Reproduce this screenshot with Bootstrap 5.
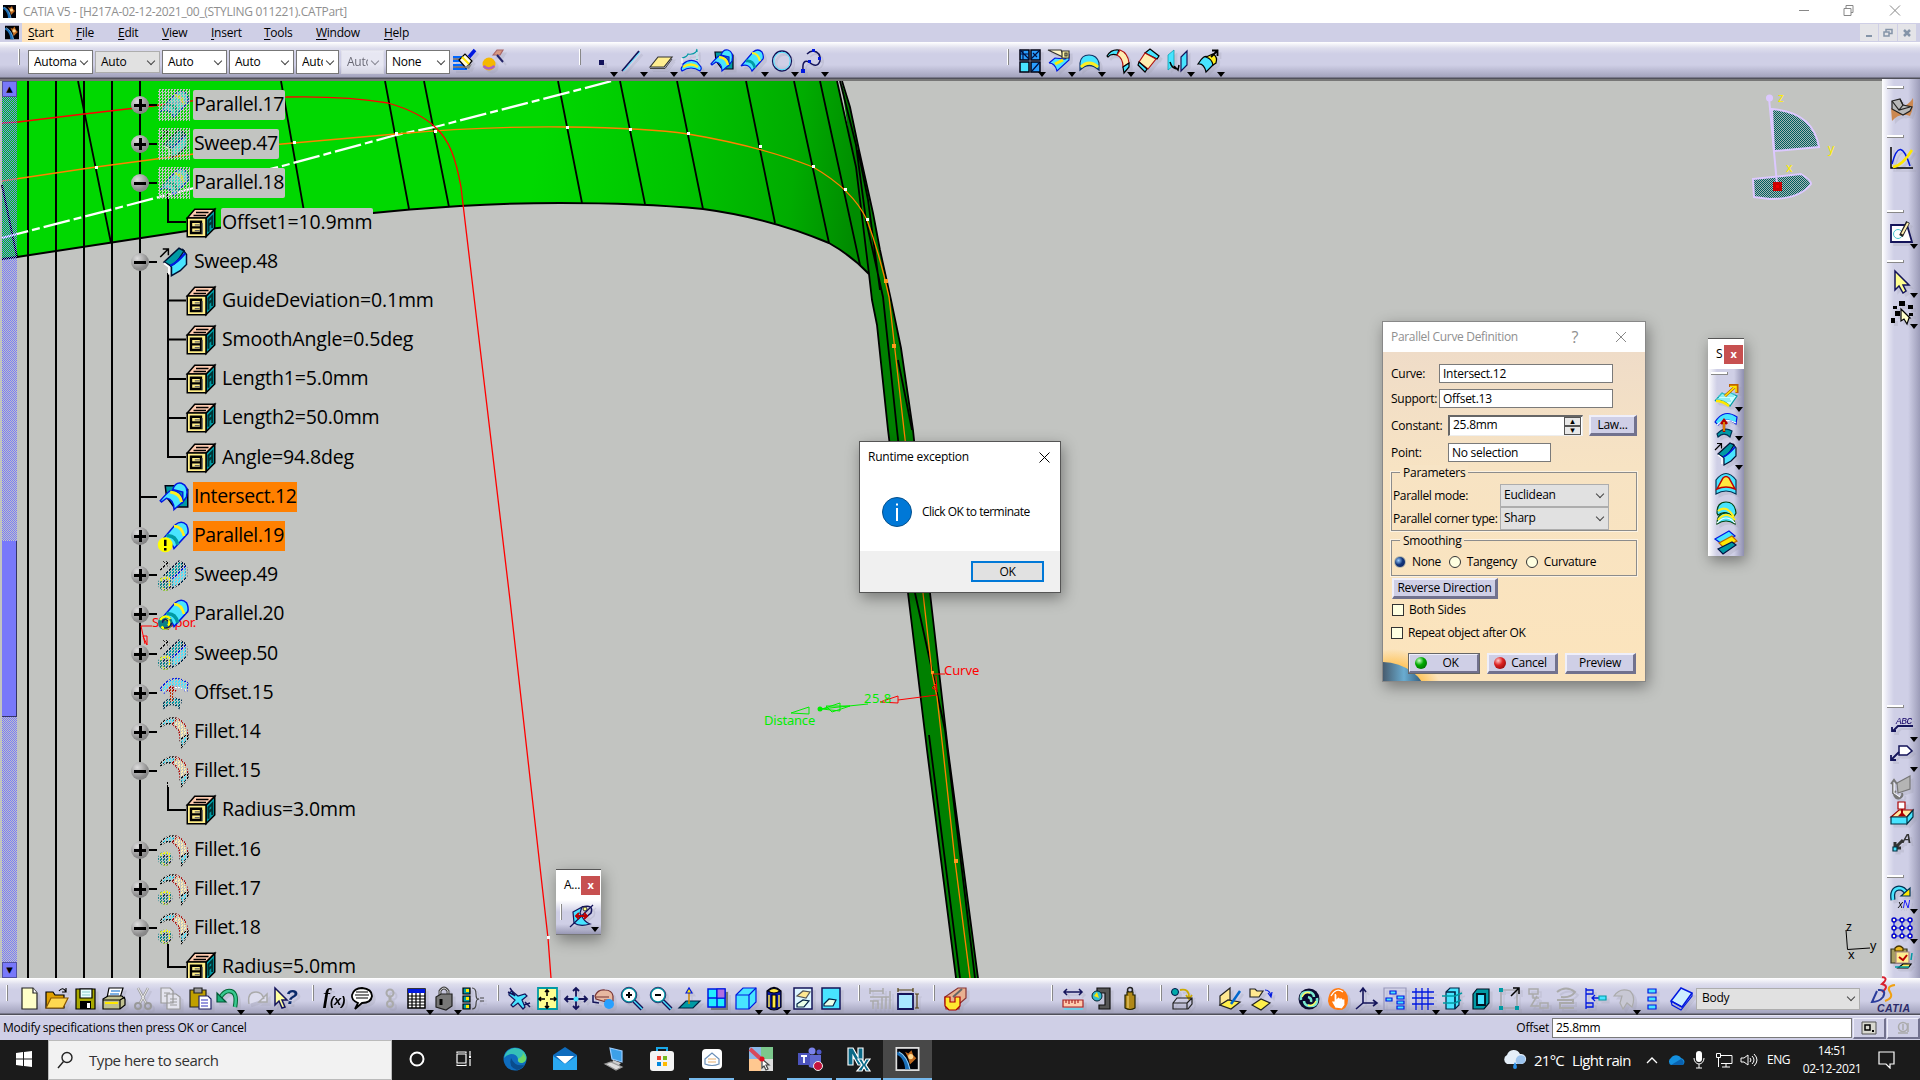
<!DOCTYPE html>
<html lang="en">
<head>
<meta charset="utf-8">
<title>CATIA V5</title>
<link href="https://cdn.jsdelivr.net/npm/bootstrap@5.3.0/dist/css/bootstrap.min.css" rel="stylesheet">
<style>
body{width:1920px;height:1080px;overflow:hidden;font:12px/1 "Open Sans","Noto Sans",sans-serif;letter-spacing:-.25px;color:#000;background:#cfcfe6}
.titleb{height:23px;background:#fff;color:#8f8f8f}
.titleb #ttl{margin-left:7px;font-size:12px;letter-spacing:-.32px}
.tlogo{margin-left:3px}
.mlogo{margin:2px 3px 0 5px}
.menub{height:19px;background:#cfcfe6}
.menub .mi{height:19px;line-height:19px;position:static;padding-left:6px}
.menub u{text-underline-offset:2px}
.m0{background:#ffe4bc;width:48px}.m1{width:42px}.m2{width:44px}.m3{width:49px}.m4{width:53px}.m5{width:52px}.m6{width:68px}
.bar{height:37px;background:linear-gradient(#fff 0,#dedeed 6px,#cfcfe6 12px,#cfcfe6 23px,#a3a3bd 35px,#50505a 36px)}
.grip{width:1px;height:16px;background:#888;border-left:1px solid #fff;flex:none;margin-bottom:8px;box-sizing:content-box}
.ic{display:inline-block;width:24px;height:24px;flex:none;position:relative}
.ic svg{width:24px;height:24px;display:block;overflow:visible;filter:drop-shadow(3px 3px 0 rgba(150,150,165,.22))}
.dd::after{content:"";position:absolute;right:-5px;bottom:-4px;border:4px solid transparent;border-top:5px solid #000;border-bottom:0}
.combos{gap:2px;margin:3px 3px 0 8px}
.combo{height:24px;line-height:20px;background:#fff;border:1px solid #777;display:flex;align-items:center;justify-content:space-between;padding:0 4px 1px 5px;flex:none;white-space:nowrap}
.combo.gray{background:#e1e1e1;border-color:#adadad;height:22px}
.combo.off{opacity:.5;border-color:#eee}
.combo .chev{width:6px;height:6px;border:solid #444;border-width:0 1px 1px 0;transform:rotate(45deg);flex:none;margin:-2px 1px 0 0}
.combo b{font-weight:400}
.combo b.cut{overflow:hidden;margin-right:4px}
.w65{width:65px}.w43{width:43px}.w64{width:64px}
.grp{display:flex;justify-content:space-between;align-items:center;flex:none}
.view{height:899px}
.canvasbox{width:1882px;position:relative;background:#c2c4c1;overflow:hidden;border-top:2px solid #777}
.canvasbox>svg{position:absolute;left:0;top:-81px}
.vscroll{position:absolute;left:2px;top:0;width:15px;height:897px;z-index:2}
.vscroll .sb{height:16px;background:#7878fa;border:1px solid #5050a0;font:13px/13px "DejaVu Sans",sans-serif;text-align:center;letter-spacing:0}
.dith{background:repeating-conic-gradient(#7878ff 0 25%,transparent 0 50%) 0 0/2px 2px}
.dith.top{height:444px}
.thumb{height:176px;background:#7878fa;border-right:1px solid #336;border-bottom:1px solid #336}
.tree{position:absolute;left:131px;top:4.4px;font-size:19.5px;letter-spacing:-.4px;z-index:1}
.tr0{height:39.2px;display:flex;align-items:center;white-space:nowrap}
.tr0 .ball{width:18px;height:18px;border-radius:50%;background:radial-gradient(circle at 35% 30%,#ddd,#8c8c8c 60%,#777);position:relative;flex:none}
.tr0 .none{background:none}
.ball::before{content:"";position:absolute;left:3px;top:8px;width:12px;height:3px;background:#000}
.ball.plus::after{content:"";position:absolute;left:8px;top:3px;width:3px;height:12px;background:#000}
.ball.none::before{display:none}
.tr0 .dash{width:8px;height:2px;background:#000;margin:0 2px 0 0;flex:none}
.tr0 .ic,.tr0 .ic svg{width:30px;height:30px}.tr0 .ic svg{filter:none}
.tr0 .lbl{margin-left:4px;padding:0 1px;height:30px;line-height:28px;display:block}
.tr0.kid{padding-left:55px}.kid .lbl{margin-left:5px;letter-spacing:-.15px}
.lbl.gr{background:#c2c4c1;border-radius:2px}.lbl.or{background:#ff8000}
.dim::after,.hid::after{content:"";position:absolute;inset:-1px;background:repeating-conic-gradient(#c2c4c1 0 25%,transparent 0 50%) 0 0/3px 3px}
.hid svg{opacity:.75}
.rbar{width:38px;background:linear-gradient(90deg,#fff 0,#e4e4f2 6px,#cfcfe6 12px,#cfcfe6 26px,#9c9cb8 38px)}
.hgrip{width:17px;height:3px;background:#fff;border-bottom:1px solid #888;border-right:1px solid #888;margin-left:5px;flex:none}
.rbar .ic{margin-left:8px}.rbar .dd::after{right:-4px}
.win{position:absolute;z-index:5;background:#fff;border:1px solid #777;box-shadow:2px 5px 14px rgba(0,0,0,.38)}
.pcd{left:1382px;top:240px;width:264px;height:361px;border-color:#888}
.pcd .cap{height:30px;color:#8f8f8f;padding:0 18px 0 8px}
.pcd .cap span{letter-spacing:-.32px}
.pcd .cap svg{margin-left:37px}
.pcd .bd{height:329px;background:linear-gradient(#efdcc8,#f7e3c3 35%,#fce4bc);padding:12px 8px 0 8px;position:relative;overflow:hidden}
.pcd .rowx{display:flex;align-items:center;white-space:nowrap}
.inp{background:#fff;border:1px solid #7a7a7a;padding:0 3px;height:19px;line-height:17px}
.btn3{background:#cfcfe6;border:solid;border-width:2px 3px 3px 2px;border-color:#efeffa #72728e #72728e #efeffa;height:21px;display:flex;align-items:center;justify-content:center;position:relative;z-index:1}
.gbox{border:1px solid #8c8c8c;outline:1px solid #fff8;position:relative}
.gbox .lg{position:absolute;left:8px;top:-8px;background:#f7e4c5;padding:0 3px;line-height:15px}
.rad{width:12px;height:12px;border:1px solid #333;border-radius:50%;background:#ffffe1;flex:none}
.rad.on{background:radial-gradient(circle at 35% 35%,#9cf,#14377c 45%,#0b1d5c);border-color:#bba}
.chk{width:12px;height:12px;border:1px solid #333;background:#ffffe1;flex:none}
.led{width:12px;height:12px;border-radius:50%;position:absolute;left:5px;top:2px}
.led.go{background:radial-gradient(circle at 35% 30%,#cfc,#0a0 40%,#050)}.led.no{background:radial-gradient(circle at 35% 30%,#fcc,#d22 40%,#700)}
.earth{position:absolute;left:0;bottom:0}
.l1{width:48px}.i1{width:174px}.r2{margin-top:6px}.r3{margin-top:7px}.l2{width:57px}
.spin{width:135px;height:21px;position:relative;border-color:#666 #eee #eee #666;border-width:2px 1px 1px 2px;line-height:16px}
.sp{position:absolute;right:1px;top:0;width:17px}.sp i{display:block;height:9px;background:#e8e8e8;border:1px solid #555;font:9px/7px "DejaVu Sans",sans-serif;text-align:center}
.law{width:48px;margin-left:6px}.r4{margin-top:7px}.i3{width:103px}
.g1{width:246px;height:59px;margin-top:10px;padding-top:11px;margin-left:0}.g1 .c3{height:23px;width:109px;padding-left:3px}.l3{width:108px;padding-left:1px;letter-spacing:-.35px}
.g2{width:246px;height:36px;margin:9px 0 0 0}.g2 .rowx{letter-spacing:-.38px}.a1{margin:0 6px 0 2px}.a2{margin:0 6px 0 8px}.a3{margin:0 6px 0 9px}
.rev{width:106px;margin:2px 0 0 1px}.k1{margin:5px 0 0 1px}.k2{margin-top:11px;letter-spacing:-.4px}.k1 .chk,.k2 .chk{margin-right:5px}
.bts{margin:14px 0 0 17px;gap:7px}.okk{width:72px;padding-left:14px;outline:1px solid #666;outline-offset:-1px}.can{width:71px;padding-left:14px}.pre{width:71px}
.palx{background:#c75050;color:#fff;width:19px;height:19px;text-align:center;line-height:17px;font-size:11px;font-weight:700}
.palcap{height:30px;padding:0 1px 0 8px;background:#fff}
.pal{left:1708px;top:257px;width:36px;height:218px;border:0;border-top:1px solid #555;background:linear-gradient(90deg,#fff 0,#cfcfe6 9px,#cfcfe6 26px,#8f8fb0 36px)}
.pal .hgrip{margin:3px 0 9px 3px}.pal .stack{padding-left:6px;gap:5.2px}
.pal2{left:556px;top:788px;width:45px;height:66px;border:0;border-top:1px solid #555;border-bottom:1px solid #777;background:linear-gradient(#fff 30px,#cfcfe6 42px,#cfcfe6 54px,#9898b4)}
.rte{left:859px;top:360px;width:202px;height:152px;border-color:#555}
.rte .cap{height:30px;padding:0 10px 0 8px}
.rte .msg{height:79px;padding-left:22px;letter-spacing:-.5px}.rte .msg span{margin-left:10px}
.rte .ft{background:#f0f0f0;padding-right:16px}
.okb{border:2px solid #0078d7;background:#e1e1e1;width:73px;height:21px;line-height:17px;text-align:center}
#bbar .ic{margin-top:4px}
.bodysel{width:164px;margin:4px 0 0 3px}.dslogo{margin:-5px 0 0 10px;overflow:visible}
.stat{height:25px;border-top:1px solid #e6e6f4}
.sbt{width:33px;height:21px;border-width:1px 2px 2px 1px;margin-left:1px}
.task{height:40px;background:#1b1b1b;color:#fff}
.task .ti{width:49px;height:40px;display:flex;align-items:center;justify-content:center;flex:none;border-bottom:2px solid transparent}
.task .run{border-image:linear-gradient(90deg,transparent 4px,#76b9ed 4px 45px,transparent 45px) 2}
.task .act{background:#484848;border-bottom:2px solid #76b9ed}
.srch{width:344px;height:40px;background:#f2f2f2;border:1px solid #bbb;color:#333;font-size:15px;letter-spacing:-.45px}
.tic,.tic svg{width:24px;height:24px}.tic svg{filter:none}
.mdi{width:18px;height:17px;background:#e4e4e8;margin:1px 0 1px 1px;display:flex;align-items:center;justify-content:center}
.tray{margin-right:24px}.t1{font-size:15px;margin-left:7px;letter-spacing:-.75px;width:38px}.t2{font-size:15px;letter-spacing:-.7px;width:57px;white-space:nowrap}.t3{font-size:12px;margin-left:9px;letter-spacing:-.5px;width:24px}.t4{font-size:12px;line-height:18px;margin-left:11px;letter-spacing:-.4px;width:60px}.t5{margin-left:16px}
</style>
<script src="https://cdn.jsdelivr.net/npm/bootstrap@5.3.0/dist/js/bootstrap.bundle.min.js"></script>
</head>
<body class="d-flex flex-column m-0">

<header class="titleb d-flex align-items-center flex-shrink-0">
  <svg width="13" height="13" viewBox="0 0 13 13" class="tlogo"><use href="#logo"/></svg>
  <span id="ttl">CATIA V5 - [H217A-02-12-2021_00_(STYLING 011221).CATPart]</span>
  <svg class="ms-auto me-1" width="121" height="23" fill="none" stroke="#888"><path d="M4 10.500H14M49 8.500h7v7h-7zM51 8v-2.500h7v7h-2M95 5.500l10 10M105 5.500l-10 10"/></svg>
</header>

<nav class="menub d-flex flex-shrink-0">
  <svg width="14" height="15" viewBox="0 0 13 13" class="mlogo"><use href="#logo"/></svg>
  <span class="mi m0"><u>S</u>tart</span><span class="mi m1"><u>F</u>ile</span><span class="mi m2"><u>E</u>dit</span><span class="mi m3"><u>V</u>iew</span><span class="mi m4"><u>I</u>nsert</span><span class="mi m5"><u>T</u>ools</span><span class="mi m6"><u>W</u>indow</span><span class="mi m7"><u>H</u>elp</span>
  <span class="mdi ms-auto"><svg width="10" height="10"><path d="M2 8h6" stroke="#8494a8" stroke-width="2"/></svg></span>
  <span class="mdi"><svg width="10" height="10" fill="none" stroke="#8494a8" stroke-width="1.500"><path d="M1 4h5v4h-5zM3 4V1.500h6v4h-3"/></svg></span>
  <span class="mdi me-1"><svg width="10" height="10"><path d="M2 2l6 6M8 2l-6 6" stroke="#8494a8" stroke-width="2.500"/></svg></span>
</nav>

<div class="bar d-flex align-items-center flex-shrink-0">
  <span class="grip" style="margin-left:18px"></span>
  <div class="combos d-flex align-items-center">
    <span class="combo w65"><b class="cut">Automatic</b><i class="chev"></i></span>
    <span class="combo gray w65"><b>Auto</b><i class="chev"></i></span>
    <span class="combo w65"><b>Auto</b><i class="chev"></i></span>
    <span class="combo w65"><b>Auto</b><i class="chev"></i></span>
    <span class="combo w43"><b class="cut">Auto</b><i class="chev"></i></span>
    <span class="combo w43 off"><b class="cut">Auto</b><i class="chev"></i></span>
    <span class="combo w64"><b>None</b><i class="chev"></i></span>
  </div>
  <i class="ic" data-i="brush"></i><i class="ic ms-1" data-i="wand"></i>
  <span class="grip" style="margin-left:74px"></span>
  <div class="grp" style="width:235px;margin-left:8px">
    <i class="ic dd" data-i="pt"></i><i class="ic dd" data-i="line"></i><i class="ic dd" data-i="plane"></i><i class="ic dd" data-i="proj"></i><i class="ic" data-i="inter"></i><i class="ic dd" data-i="par"></i><i class="ic dd" data-i="circ"></i><i class="ic dd" data-i="spline"></i>
  </div>
  <span class="grip" style="margin-left:183px"></span>
  <div class="grp" style="width:203px;margin-left:8px">
    <i class="ic dd" data-i="join"></i><i class="ic dd" data-i="split"></i><i class="ic dd" data-i="bound"></i><i class="ic dd" data-i="fil"></i><i class="ic" data-i="fil2"></i><i class="ic dd" data-i="trans"></i><i class="ic dd" data-i="extra"></i>
  </div>
</div>

<main class="view d-flex flex-shrink-0">
 <div class="canvasbox">
  <svg width="1882" height="978" viewBox="0 0 1882 978">
   <defs>
    <linearGradient id="gg" gradientUnits="userSpaceOnUse" x1="540" y1="120" x2="860" y2="160"><stop offset="0" stop-color="#00d800"/><stop offset=".45" stop-color="#00c400"/><stop offset=".8" stop-color="#00ac00"/><stop offset="1" stop-color="#008c00"/></linearGradient>
    <pattern id="dt" width="2" height="2" patternUnits="userSpaceOnUse"><rect width="2" height="2" fill="#a8b8b4"/><path d="M0 0h1v1h-1zM1 1h1v1h-1z" fill="#005c60"/></pattern>
    <symbol id="logo" viewBox="0 0 13 13"><rect width="13" height="13" fill="#020208"/><path d="M0 2C5 4 7 8 8 13H5C5 9 3 5 0 4z" fill="#1b6fb8"/><path d="M1 2c4 2 6 6 7 11" fill="none" stroke="#8cf" stroke-width=".7"/><path d="M5 2L7 3 9 1 10 4 12 6 10 8 8 10 7 6z" fill="#c06a20"/><circle cx="8.500" cy="5" r="1.600" fill="#ffd890"/></symbol>
   </defs>
   <path d="M841 81L850 107 859 150 873 213 880 250 891 300 901 348 913 430 930 593 948 750 978 978H956L927 750 908 593 888 430 877 325 872 300 869 274Z" fill="#008000"/>
   <path d="M2 81H837L856 167 867 220 869 274Q852 256 829 243Q770 218 703 209Q640 203 560 203Q510 203 460 206L410 209.500 373 213 187 231 17 257 2 259Z" fill="url(#gg)"/>
   <path d="M2 259L17 257 187 231 373 213 410 209.500 460 206Q510 203 560 203Q640 203 703 209Q770 218 829 243Q852 256 869 274" fill="none" stroke="#000" stroke-width="2"/>
   <g fill="none" stroke="#000" stroke-width="1.800">
    <path d="M78 81L111 243M281 81L305 217M385 81L409 209M424 81L449 207M558 81L582 203M620 81L645 204M677 81L703 209M746 81L775 223M794 81L829 243M820 81L860 265M837 81L856 167L869 274M2 185L17 257"/>
    <path d="M842 81L850 107 859 150 873 213 880 250 891 300 901 348 913 430 930 593 948 750 978 978"/>
    <path d="M869 274L872 300 877 325 888 430 908 593 927 750 956 978M929 735L960 978"/>
    <path d="M840 81L856 145 866 220 883 297 897 430 915 593 932 670 937 693 945 730 975 978M858 150L868 200 880 290M898 360L912 430"/>
   </g>
   <path d="M28 81V978M56 81V978M84 81V978M112 81V978M140 81V978" stroke="#000" stroke-width="2"/>
   <path d="M2 238L194 188 286 165 396 135 435 127 612 81" fill="none" stroke="#fff" stroke-width="2.300" stroke-dasharray="27 4 8 4"/>
   <g fill="none" stroke-width="1.300">
    <path d="M2 181L96 167 194 154 282 144 396 134Q486 126 567 127T688 134Q760 146 813 167Q853 190 867 220Q880 255 889 297L904 430 923 593 932 673 937 697 943 750 955 861 970 978" stroke="#ff8000"/>
    <path d="M2 123L18 122 84 114 153 106C200 98 250 97 286 97C330 96 359 98 388 103C412 110 425 117 435 127C450 140 456 160 461 187L472 280 510 600 548 938 551 978" stroke="#f00"/>
   </g>
   <path d="M95 166h3v3h-3zM293 141h3v3h-3zM395 132h3v3h-3zM434 130h3v3h-3zM566 126h3v3h-3zM629 128h3v3h-3zM687 132h3v3h-3zM759 145h3v3h-3zM812 165h3v3h-3zM844 188h3v3h-3zM866 218h3v3h-3zM547 936h3v3h-3z" fill="#fff"/>
   <path d="M884 279h4v4h-4zM892 344h4v4h-4zM954 859h4v4h-4zM931 671h3v3h-3z" fill="#ff9a20"/>
   <path d="M168 194V222H186M168 273V457H186M168 300.500H186M168 339.500H186M168 379H186M168 418H186M168 782V810H186M168 940V967H186M140 497H157" fill="none" stroke="#000" stroke-width="2"/>
   <g font-size="13" font-family="Noto Sans">
    <g fill="none" stroke="#f00"><path d="M933 674H945M936 676L937 692M932 688L936 684V690ZM937 695L898 700M880 702L898 696V703ZM141 626H152M141 626L145 644M143 636H147V645Z"/></g>
    <g fill="none" stroke="#0e0"><path d="M868 704L820 709M822 709L840 703V711ZM826 706L850 706L832 712ZM791 713L809 707V714Z"/></g><circle cx="820" cy="709" r="2.500" fill="#0e0"/>
    <text x="944" y="675" fill="#f00" textLength="35">Curve</text><text x="152" y="627" fill="#f00" textLength="44">Suppor.</text>
    <g fill="#0e0"><text x="764" y="725" textLength="51">Distance</text><text x="864" y="703" textLength="27">25.8</text></g>
   </g>
   <g stroke="#dcc8ff" stroke-width="2" fill="url(#dt)"><path d="M1772 109Q1813 112 1819 147L1774 151Z"/><path d="M1753 179L1801 174Q1811 180 1811 184Q1800 199 1770 199L1754 197Z"/><path d="M1769 98L1777 184"/></g><circle cx="1769.500" cy="98" r="3.500" fill="#dcc8ff"/><path d="M1773 182h9v9h-9z" fill="#c00"/><path d="M1776 185h3v3h-3z" fill="#e00"/>
   <g fill="#ffee00" font-size="12.500" font-family="Noto Sans"><text x="1778" y="102">z</text><text x="1828" y="153">y</text><text x="1786" y="172">x</text></g>
   <g font-size="12.500" font-family="Noto Sans"><text x="1846" y="931">z</text><text x="1870" y="950">y</text><text x="1848" y="959">x</text></g><path d="M1846 930L1847.500 949.500L1870 948" stroke="#000" fill="none"/>
  </svg>

  <div class="vscroll d-flex flex-column"><div class="sb">▴</div><div class="dith top"></div><div class="thumb"></div><div class="dith flex-fill"></div><div class="sb">▾</div></div>

  <div class="tree" id="tree"></div>

  <section class="win pcd">
   <div class="cap d-flex align-items-center"><span>Parallel Curve Definition</span><span class="ms-auto fs-6">?</span><svg width="12" height="12"><path d="M1 1l10 10M11 1L1 11" stroke="#888"/></svg></div>
   <div class="bd">
    <div class="rowx"><span class="l1">Curve:</span><span class="inp i1">Intersect.12</span></div>
    <div class="rowx r2"><span class="l1">Support:</span><span class="inp i1">Offset.13</span></div>
    <div class="rowx r3"><span class="l2">Constant:</span><span class="inp spin">25.8mm<span class="sp"><i>▴</i><i>▾</i></span></span><span class="btn3 law">Law...</span></div>
    <div class="rowx r4"><span class="l2">Point:</span><span class="inp i3">No selection</span></div>
    <div class="gbox g1"><span class="lg">Parameters</span>
      <div class="rowx"><span class="l3">Parallel mode:</span><span class="combo gray c3">Euclidean<i class="chev"></i></span></div>
      <div class="rowx"><span class="l3">Parallel corner type:</span><span class="combo gray c3">Sharp<i class="chev"></i></span></div></div>
    <div class="gbox g2"><span class="lg">Smoothing</span><div class="rowx h-100 pt-2"><i class="rad on a1"></i>None<i class="rad a2"></i>Tangency<i class="rad a3"></i>Curvature</div></div>
    <span class="btn3 rev">Reverse Direction</span>
    <div class="rowx k1"><i class="chk"></i>Both Sides</div>
    <div class="rowx k2"><i class="chk"></i>Repeat object after OK</div>
    <svg class="earth" width="60" height="34"><defs><radialGradient id="eg"><stop offset=".6" stop-color="#ffb52e" stop-opacity=".8"/><stop offset="1" stop-color="#ffb52e" stop-opacity="0"/></radialGradient><linearGradient id="eb"><stop offset="0" stop-color="#234"/><stop offset=".5" stop-color="#456"/><stop offset=".75" stop-color="#6aacd0"/><stop offset="1" stop-color="#246"/></linearGradient></defs><circle cx="10" cy="52" r="50" fill="url(#eg)"/><ellipse cx="-2" cy="52" rx="46" ry="37" fill="url(#eb)"/></svg>
    <div class="d-flex bts"><span class="btn3 okk"><i class="led go"></i>OK</span><span class="btn3 can"><i class="led no"></i>Cancel</span><span class="btn3 pre">Preview</span></div>
   </div>
  </section>

  <section class="win pal">
   <div class="palcap d-flex align-items-center"><span>S</span><span class="palx ms-auto">x</span></div>
   <div class="hgrip"></div>
   <div class="stack d-flex flex-column"><i class="ic dd" data-i="extr"></i><i class="ic dd" data-i="off"></i><i class="ic dd" data-i="swp"></i><i class="ic" data-i="fill"></i><i class="ic" data-i="loft"></i><i class="ic" data-i="blend"></i></div>
  </section>
  <section class="win pal2">
   <div class="palcap d-flex align-items-center"><span>A...</span><span class="palx ms-auto">x</span></div>
   <div class="d-flex pt-1 ps-1"><span class="grip"></span><i class="ic dd ms-2" data-i="ana"></i></div>
  </section>
  <section class="win rte d-flex flex-column">
   <div class="cap d-flex align-items-center justify-content-between"><span>Runtime exception</span><svg width="11" height="11"><path d="M0.500 .500l10 10M10.500 .500l-10 10" stroke="#000"/></svg></div>
   <div class="msg d-flex align-items-center"><svg width="30" height="30"><circle cx="15" cy="15" r="14.500" fill="#0078d7" stroke="#05508c"/><path d="M15 6.500v2M15 11v13" stroke="#fff" stroke-width="2"/></svg><span>Click OK to terminate</span></div>
   <div class="ft flex-fill d-flex justify-content-end align-items-center"><span class="okb">OK</span></div>
  </section>
 </div>

 <aside class="rbar d-flex flex-column">
  <span class="hgrip" style="margin-top:7px"></span><i class="ic" data-i="wb" style="margin-top:9px"></i>
  <span class="hgrip" style="margin-top:13px"></span><i class="ic" data-i="graph" style="margin-top:8px"></i>
  <span class="hgrip" style="margin-top:40px"></span><i class="ic dd" data-i="sk" style="margin-top:8px"></i>
  <span class="hgrip" style="margin-top:15px"></span><i class="ic dd" data-i="arrow" style="margin-top:7px"></i><i class="ic dd" data-i="sel2" style="margin-top:7px"></i>
  <span class="hgrip" style="margin-top:380px"></span><i class="ic dd" data-i="abc" style="margin-top:6px"></i><i class="ic dd" data-i="flag" style="margin-top:6px"></i><i class="ic" data-i="gsurf" style="margin-top:7px"></i><i class="ic" data-i="stamp" style="margin-top:3px"></i><i class="ic" data-i="aa" style="margin-top:5px"></i>
  <span class="hgrip" style="margin-top:20px"></span><i class="ic dd" data-i="rep" style="margin-top:8px"></i><i class="ic dd" data-i="patt" style="margin-top:6px"></i><i class="ic" data-i="clip" style="margin-top:6px"></i>
 </aside>
</main>

<div class="bar d-flex align-items-center flex-shrink-0" id="bbar"></div>

<div class="stat d-flex align-items-center flex-shrink-0">
  <span style="margin-left:3px">Modify specifications then press OK or Cancel</span>
  <span class="ms-auto" style="margin-right:3px">Offset</span><span class="inp" style="width:300px;height:20px">25.8mm</span>
  <span class="btn3 sbt"><svg width="16" height="14"><path d="M1 1h14v12H1z" fill="#d8d8d0" stroke="#555"/><path d="M4 4h5v5h-5z" fill="none" stroke="#000" stroke-width="1.500"/><path d="M11 9h2v2h-2z"/></svg></span><span class="btn3 sbt"><svg width="16" height="14" fill="none" stroke="#aaa" stroke-width="1.500"><circle cx="8" cy="6" r="4.500"/><path d="M8 3v6M3 12h10M13 2v9"/></svg></span>
</div>

<footer class="task d-flex flex-shrink-0">
  <span class="ti" style="width:48px"><svg width="16" height="16" fill="#fff"><path d="M0 2l7-1v6.500H0zM8 1l8-1v7.500H8zM0 8.500h7V15l-7-1zM8 8.500h8V16l-8-1z"/></svg></span>
  <span class="srch d-flex align-items-center"><svg width="16" height="18" class="mx-2 ms-2" fill="none" stroke="#222" stroke-width="1.400"><circle cx="10" cy="6.500" r="5"/><path d="M6.500 10.500L1 17"/></svg><span class="ms-1 ps-1">Type here to search</span></span>
  <span class="ti"><i class="ic tic" data-i="cort"></i></span><span class="ti" style="width:46px"><i class="ic tic" data-i="tv"></i></span>
  <span class="ti" style="width:56px"><i class="ic tic" data-i="edge"></i></span><span class="ti" style="width:43px"><i class="ic tic" data-i="mail"></i></span><span class="ti" style="width:55px"><i class="ic tic" data-i="rdp"></i></span><span class="ti" style="width:42px"><i class="ic tic" data-i="store"></i></span>
  <span class="ti run" style="margin-left:4px"><i class="ic tic" data-i="houz"></i></span><span class="ti"><i class="ic tic" data-i="map"></i></span><span class="ti run"><i class="ic tic" data-i="teams"></i></span><span class="ti run"><i class="ic tic" data-i="nx"></i></span><span class="ti act"><svg width="25" height="24" viewBox="-1 -1 15 15"><rect x="-1" y="-1" width="15" height="15" fill="#ddd"/><use href="#logo" width="13" height="13"/></svg></span>
  <div class="ms-auto d-flex align-items-center tray">
   <i class="ic tic" data-i="rain"></i><span class="t1">21°C</span><span class="t2">Light rain</span>
   <svg width="12" height="8" style="margin-left:17px" fill="none" stroke="#fff" stroke-width="1.300"><path d="M1 7l5-5 5 5"/></svg>
   <svg width="18" height="14" style="margin-left:9px"><path d="M4 12a4 4 0 010-7A6 6 0 0114 5a4 4 0 012 7z" fill="#1490df"/><path d="M4 12l10-6a4 4 0 012 6z" fill="#0a62b0"/></svg>
   <svg width="12" height="18" style="margin-left:8px"><rect x="3" y="0" width="6" height="11" rx="3" fill="#fff"/><path d="M1 7a5 6 0 0010 0M6 13v4M3 17h6" fill="none" stroke="#fff"/></svg>
   <svg width="17" height="16" style="margin-left:11px" fill="none" stroke="#fff"><path d="M5 3.500h11v8H5M10 12v3M6 15h8M.500 1.500h4v4h-4zM2.500 6v9"/></svg>
   <svg width="18" height="16" style="margin-left:7px" fill="none" stroke="#fff"><path d="M1 6h3l4-3v10l-4-3H1zM10 6q2 2 0 4M12 4q4 4 0 8M14 2q6 6 0 12"/></svg>
   <span class="t3">ENG</span><span class="t4 text-center">14:51<br>02-12-2021</span>
   <svg width="18" height="18" class="t5" fill="none" stroke="#fff" stroke-width="1.200"><path d="M1 1h15v12H12v4l-4-4H1z"/></svg>
  </div>
</footer>

<script>
// Icon shapes on a 24-unit grid
const N='#14145a',C='#48e4ff',Y='#ffe800',T='#009aa4',B='#0018e0';
const p=(d,f='none',s='none',w=1.2)=>`<path d="${d}" fill="${f}" stroke="${s}" stroke-width="${w}"/>`;
const mag=s=>p('M14 14l8 8','none',N,4)+p('M14 14l8 8','none',C,1.500)+`<circle cx="9" cy="8" r="7" fill="#fff" stroke="${T}" stroke-width="1.500"/><circle cx="9" cy="8" r="7.800" fill="none" stroke="${N}" stroke-width=".7"/>`+p(s,'none','#000',2);
const tube=p('M1 17L13 3Q18-1 22 3Q24 7 23 10L12 22Q9 14 1 17Z',C,B)+p('M6 12q7-1 9 7',"none",T,2.800)+p('M12 4q6 0 8 8','none','#ffee20',2.200);
const swirl='<circle cx="5" cy="19" r="5.800" fill="#0a7f88"/>'+p('M1 17a4.500 4.500 0 018-1M9 21a4 4 0 01-7 1M5 17a2 2 0 012 4','none','#ff0',1.800)+p('M3 19a2 2 0 014-1M4 23q5 1 6-4','none',N,1.200);
const I={
brush:p('M0 8h11M0 12h11M0 16h12M0 20h14','none','#06f',1.800)+p('M0 10h10M0 18h13','none','#000',.8)+p('M6 11l6-6 7 7-6 7z','#fffbe0','#000')+p('M9 8l7 7','none',Y,2)+p('M16 8l6-7','none',B,3.500)+p('M10 18l6 2 3-5','#888'),
wand:'<circle cx="8" cy="15" r="6.500" fill="#f5b800"/>'+p('M2.500 17q5 5 11 0','none','#b060c0',2.500)+p('M12 6l4-5 6 0-3 5z','#d89880','#a66')+p('M16 6l6 7','none','#226',2),
pt:p('M10 11h5v5h-5z',N),line:p('M3 22L20 2','none',N,1.800)+p('M4.500 22L21 3','none',C,1),
plane:p('M1 18L9 8H23L15 18Z','#ffee90','#333')+p('M1 19.500H16L23 10','none','#444',1),
proj:p('M3 9Q8 8 9 5Q14 6 17 3L18 0M18 1V11','none',T,1.100)+p('M3 9V14M18 3V10','none','#fff',1.200)+p('M3 22Q1 19 4 17L4 15Q11 9 18 13L22 18Q23 20 21 22Q12 16 3 22Z',C,B)+p('M4 18q8-5 15 0','none','#ffee20',2.500),
inter:p('M5 3L17 3 23 6V20H12L6 12Z',T,'#001')+p('M11 6Q13 0 18 1Q24 3 22 12L19 16V8Z',C,B)+p('M1 15Q6 9 9 7Q18 6 19 16L12 22Q12 14 6 13L2 16Z',C,B)+p('M9 8q8 1 9 8','none','#ffee20',2.500),
par:tube,circ:'<ellipse cx="12" cy="12" rx="9.500" ry="10" fill="none" stroke="#14145a" stroke-width="1.300"/><ellipse cx="12" cy="12" rx="8.200" ry="8.800" fill="none" stroke="#48e4ff"/>',
spline:p('M3 21Q2 10 9 13Q17 20 20 12Q21 3 13 2Q10 2 7 5','none',N,1.500)+p('M1 20h4v4h-4zM8 11h3v3H8zM18 8h3v3h-3zM12 0h3v3h-3z',B),
join:p('M3 1h9v10H3zM14 1h9v10h-9zM14 13h9v10h-9z','#2a9fff','#001',1.500)+p('M3 13h9v10H3z',C,'#001',1.500)+p('M3 1l9 9M14 10l8-8M15 22l7-8M16 4l4 4M6 2v9M3 5h9','none','#014'),
split:p('M2 14L8 9 18 10 22 6V11L10 22Q8 14 2 14',C,B)+p('M8 15l8-4','none',Y,3)+p('M1 1h13l4 8z','#fff7c8','#333')+p('M15 2h7v7h-7z','#fff7a0','#333')+p('M18 4h2v3h-2z','none','#333'),
bound:p('M3 21V14Q4 6 12 6Q20 6 22 14V21Q12 12 3 21Z',C,'#136')+p('M4 18Q12 10 21 18','none','#ffee20',2.800),
fil:p('M1 7Q5 0 13 1L11 6Q5 4 2 8Z',C,'#000')+p('M11 6L14 1Q22 4 23 14L17 18Q17 9 11 6Z','#ffeeb0','#b01010')+p('M17 18l6-4v4l-5 6z',C,'#000'),
fil2:p('M9 4L14 0 23 7 21 10Z',C,'#000')+p('M9 4L20 10 12 20 3 13Z','#ffeeb0','#b01010')+p('M3 13l8 7-2 3-7-7z',C,'#000'),
trans:p('M2 6L8 1V16L2 21Z',C,T,.7)+p('M15 8L21 2V16L15 22Z',C,N)+p('M4 13q2 7 8 7M8 17l4 4 1-5','none','#000',1.500),
extra:p('M2 15Q8 5 12 8Q17 9 17 16L10 23Q8 14 2 15Z',C,'#000')+p('M10 8L17 5Q22 8 20 14L17 16Q16 10 10 8z','#ffee20','#000')+p('M15 8L22 1M16 1.500h5.500V7','none','#000',1.800),
extr:p('M1 17L8 9Q12 12 15 8L23 12 16 22Q8 14 1 17Z','#c8ffff',T)+p('M2 15h14M4 12h16M6 10h15M8 17h9','none','#58dce8',1)+p('M2 17Q9 17 15 22','none',Y,2.500)+p('M11 12L22 2M15 1.500h8V9','none','#c06000',3)+p('M11 12L22 2M16 2.500h6V8','none',Y,1.500),
off:p('M1 9Q10-5 23 4L22 11Q12 3 4 12Z',C,B)+p('M3 12Q11 4 22 10','none','#fff',1.300)+p('M3 21Q10 13 18 18L16 24Q10 18 4 24Z',T,'#035')+p('M10 19V7M7 11l3-4 3 4','none','#b00000',2.500)+p('M10 18V9','none',Y,1.100),
swp:p('M6 12Q12 13 15 8L19 2 22 6V14L17 19 10 23V16Z',C,'#013')+p('M4 12L16 1 20 3Q14 14 9 15Z',T,'#013')+p('M9 15Q14 13 21 5','none',B,1.800)+p('M1 8L7 2M3 1.500h4.500v5','none','#000')+p('M4 13L8 16V22','none','#fff',1.500),
fill:p('M2 22V8Q12-5 22 8V22Q12 16 2 22Z',C,'#035')+p('M3 17L9 6q3-3 6 0L21 17Q12 13 3 17Z','#ffe840','#c00000',1.500),
loft:p('M3 12Q3 1 12 1Q21 1 22 12L19 17Q12 8 4 14Z',C,'#041')+p('M3 23Q3 12 12 12Q20 12 21 23Q12 17 3 23Z',C,'#041')+p('M4 10Q12 3 20 16M4 19q8-10 17 0','none','#ffee20',2.200)+p('M3 22q9-10 18 0','none','#fff',1.200),
blend:p('M1 9L15 1 21 6 8 14Z',C,B)+p('M5 13L18 6 23 11 10 18Z',Y,'#b60')+p('M4 19L18 12 22 15 9 24Z',T,'#014'),
ana:p('M3 8L12 3 10 9Q14 18 20 20Q10 23 4 19Z',C,N)+p('M12 3Q24 0 21 9L15 14','none',N,1.500)+'<circle cx="15" cy="5" r="2" fill="#ff8" stroke="#333"/>'+p('M0 23L23 1','none',N)+p('M7 12h9M9 9l-3 3 3 3M14 9l3 3-3 3','none','#b00',2),
wb:p('M1 10Q6 13 10 10Q20 6 23 0Q24 10 20 18Q10 14 2 23Z','#cc8850')+p('M2 3L10 1 13 7 22 9 20 13 13 17 2 11Z','#b8b8b8','#222')+p('M10 1l3 6-4 5M2 3l7 9 11-3','none','#222'),
graph:p('M1 1V22H23','none','#000',1.500)+p('M2 18Q10-12 20 20','none',B,1.500)+p('M3 21Q12 20 22 4','none',Y,2.500),
sk:p('M1 4H17L22 21H1Z','#fff',N,1.800)+'<circle cx="8" cy="13" r="4.500" fill="none" stroke="#48c4cf"/>'+p('M11 15L18 1','none','#222',4)+p('M12 13L18 2','none','#ffeeb0',2),
arrow:p('M5 1V20L9 16 13 23 16 21 13 15H19Z','#ffff90',N,1.500),
sel2:p('M3 5h4v3H3zM9 0h6v5H9zM18 4h5v4h-5zM1 17h4v5H1zM5 10h5v5H5zM19 12h4v3h-4z','#000')+p('M11 8V20L14 18 17 23 19 17H20Z','#ffc',"#000"),
abc:'<text x="6" y="10" font-size="9.500" font-family="Liberation Mono" letter-spacing="-.5" fill="#106">ABC</text>'+p('M23 12H8L3 17M2 13v4h4','none',N,1.800),
flag:p('M9 2H17L22 7 17 11H9Z','#fff',N,1.500)+p('M9 8L2 15M1 11v5h5','none',N,1.800),
gsurf:p('M7 8L20 1V14L8 18Z','#b4b4b4','#777')+p('M3 8V18L9 23M1 9l3-4 3 4M6 16a4 4 0 106 2','none','#777',2)+p('M4 8V18L10 22','none','#fff',1),
stamp:p('M1 15L9 8H23L17 15Z','#ffe8a0','#900')+p('M1 15H17V22H1ZM17 15L23 8V15L17 22Z',C,'#034')+p('M8 0h7v7H8z','#fff','#a00')+p('M11 7v4l-3 3h8l-3-3V7','#a00'),
aa:'<text x="12" y="12" font-size="13" font-weight="700" font-family="Liberation Sans" fill="#333">A</text>'+p('M13 9L6 16M5 11v6h6','none','#333',3)+p('M3 16h4v4H3z',C,'#034'),
rep:p('M3 14Q1 3 9 2Q14 2 17 8','none','#035',5)+p('M3 14Q1 3 9 2Q14 2 17 8','none',C,2.500)+p('M11 10h9V2z',Y,'#035')+'<text x="8" y="22" font-size="10" font-family="Liberation Sans">x<tspan fill="#00f">N</tspan></text>',
patt:p('M4 4H20M4 12H20M4 20H20M4 4V20M12 4V20M20 4V20','none',B)+[4,12,20].map(x=>[4,12,20].map(y=>`<circle cx="${x}" cy="${y}" r="2" fill="#ffc" stroke="#00c" stroke-width="1.500"/>`).join('')).join(''),
clip:p('M1 3h16v14H1z','#a8a060','#332')+p('M5 2q4-4 8 0v3H5z',"#e8b820",'#430')+p('M6 6h13v11H6z','#ffee90','#a88')+p('M9 11l4 3 4-5','none','#b00',2)+p('M8 22l5-4h8l-3 4z','#ffee60','#000')+p('M22 7l-1 7M5 21h14','none',T,1.500),
new:p('M5 1H16L20 6V22H5Z','#ffffc8','#222')+p('M16 1V6H20','#fff','#222'),
open:p('M1 5h7l2 3h9v13H1z','#e0a000','#000')+p('M1 21L6 11H23L18 21Z','#ffd850','#850')+p('M14 4q4-5 7 1M21 1v4h-4','none','#000'),
save:p('M2 2h19v20H2z','#a8a800','#000')+p('M6 2h12v9H6z','#eaffff','#000')+p('M8 5h8M8 8h8','none','#8cc')+p('M6 14h11v8H6z','#000')+p('M13 16h3v5h-3z','#fff'),
print:p('M7 1h14l-3 10H5z','#fff','#000')+p('M9 4h9M8 7h9','none','#06c')+p('M1 12l5-3h14l3 3v6l-5 4H1z','#c0c090','#000')+p('M1 13h17v9M18 13l5-3','none','#000')+p('M3 16h13','none',Y,2),
cut:p('M7 1l8 15M17 1L9 16','none','#999',2.500)+p('M7 1l8 15M17 1L9 16','none','#eee',1)+'<g fill="none" stroke="#999" stroke-width="2"><circle cx="7" cy="19" r="3"/><circle cx="17" cy="19" r="3"/></g>',
copy:p('M2 1h9l3 3v12H2zM8 7h9l4 3v12H8z','#e4e4ee','#999')+p('M5 6h6M5 9h3M11 12h7M11 15h7M11 18h7','none','#999'),
paste:p('M2 3h16v17H2z','#c0a000','#222')+p('M6 1h8v5H6z','#999','#222')+p('M11 9h9l3 3v10H11z','#fff','#226')+p('M13 13h7M13 16h7M13 19h7','none','#33b'),
undo:p('M19 20Q22 4 13 4Q8 4 4 11','none','#063',4.500)+p('M19 20Q22 4 13 4Q8 4 4 11','none','#38c890',2.500)+p('M1 6V15H10Z','#18b078','#053'),
redo:p('M4 17Q2 5 11 5Q17 5 19 12M22 7V15H14Z','#dde','#aaa',1.500),
help:p('M2 1V18L6 14 9 21 12 20 9 13H14Z','#ffffa0',N,1.500)+'<text x="12" y="17" font-size="21" font-weight="700" font-family="Liberation Sans" fill="#0a2a6a">?</text>',
fx:'<text x="1" y="16" font-size="21" font-style="italic" font-weight="700" font-family="Liberation Serif">f</text><text x="8" y="18" font-size="13" font-weight="700" font-family="Liberation Sans">(x)</text>',
bub:p('M5 22L8 16Q1 13 2 8Q4 1 12 1Q22 2 22 9Q21 16 12 16Z','#fff','#000',1.800)+p('M6 5h12M5 8h14M6 11h12','none','#000'),
key:'<circle cx="12" cy="6" r="3.500" fill="none" stroke="#aaa" stroke-width="2"/><circle cx="12" cy="17" r="3" fill="none" stroke="#aaa" stroke-width="2"/>'+p('M12 10v3','none','#aaa',3),
tbl:p('M3 2h17v19H3z','#fff','#000',1.500)+p('M3 2h17v4H3z',B)+p('M3 9h17M3 12h17M3 15h17M3 18h17M7 6v15M11 6v15M15 6v15','none','#000'),
lock:p('M7 10V4q4-6 8 0v5','none','#444',3)+p('M7 10V4q4-6 8 0v5','none','#ccc',1)+p('M3 10l5-3h11v12l-6 4-10-3z','#777','#222')+p('M8 12v6','none','#000',3),
conf:p('M2 1h7v6H2zM2 9h7v6H2zM2 17h7v5H2z',T,'#000')+p('M5 2h3v3H5zM5 10h3v3H5zM5 18h3v3H5z',Y)+p('M11 1q4 0 4 6t3 5q-3 0-3 5t-4 5M19 11h4M19 14h4','none','#444'),
fly:p('M2 6L5 4 11 9 18 7 20 9 15 13 18 20 16 22 11 16 6 20 4 18 8 13 2 8Z',C,N)+p('M3 1l5 8M1 5l6 3M18 15l5 5M17 18l6-2','none',N,1.500),
fit:p('M3 1h19v21H3z','#ffff90',T,1.800)+p('M12 3v6M12 15v6M4 12h6M15 12h6M10 5l2-2 2 2M10 19l2 2 2-2M6 10l-2 2 2 2M19 10l2 2-2 2','none','#000',1.600),
pan:p('M12 1v21M1 12h22M9 4l3-3 3 3M9 19l3 3 3-3M4 9l-3 3 3 3M20 9l3 3-3 3','none',N,1.800)+'<circle cx="12" cy="12" r="2.500" fill="#48e4ff"/>',
rot:p('M3 9Q6 2 13 3Q20 3 21 9V14L14 15 4 12Z','#e8b8a0','#733')+p('M4 10h13M12 13h6','none','#733')+'<circle cx="17" cy="17" r="5" fill="#28a0ff"/>'+p('M1 8v7l6 1','none',N,1.500),
zin:mag('M6 8h6M9 5v6'),zout:mag('M6 8h6'),
norm:p('M2 21L9 14H23L16 21Z',T,'#024')+p('M12 17V4','none','#c80',1.500)+p('M9 6l3-5 3 5z',Y,B),
multi:p('M5 5h17v18H5z','#777')+p('M2 2h17v18H2z','#2ef',B,1.500)+p('M11 2v18M2 11h17','none',B,1.500)+p('M11 2h8v9h-8z','#b070e0',B),
cube:p('M2 8L9 1H22V15L15 22H2Z',C,B)+p('M2 8H15V22M15 8L22 1','none',B),
cyl:p('M5 4Q12-3 19 4V20Q12 26 5 20Z','#0818a0','#001')+p('M6 4Q12-1 18 4Q12 8 6 4ZM10 8h4v13h-4z','#ffe840','#001')+p('M7 8v12M17 8v12','none','#ffe840',1.500),
h1:p('M3 1h18v21H3z','#ddf6ff',N,1.500)+p('M6 9l6-5 7 1-4 6z','#ffe890','#555')+p('M6 17l6-4 6 1-5 6H6z','#e8ffe8','#024'),
h2:p('M3 1h18v21H3z',C,N,1.500)+p('M5 17l5-5 7 1-3 6H5z','#e8ffe8','#024'),
d1:p('M2 4h13M2 1v6M15 1v6M2 10h19M2 14h8v8M5 14v8M14 10v12M18 10v12M22 4v18','none','#aaa',1.500),
d2:p('M2 7h15v15H2z','#a8e8ff',N,1.800)+p('M2 3h15M2 1v4M17 1v4M21 7v14M19 7h4M19 21h4','none','#541'),
cutp:p('M2 10L15 1h8v10l-7 6v5H3l-1-7z','#e8b090','#833')+p('M2 10h5v5h5v-5h5v9l-4 4H6l-4-4z','#ffe830','#a00')+p('M10 10L19 2','none','#666',2),
meas:p('M3 5h18M6 2L3 5l3 3M18 2l3 3-3 3','none',N,1.500)+p('M2 13h20v7H2z','#ffccb0','#a22')+p('M5 13v3M8 13v4M11 13v3M14 13v4M17 13v3','none','#a22')+p('M3 22h19','none',C),
cal:p('M7 1h13v21H9v-4h6V6H7z','#555','#111')+'<circle cx="7" cy="9" r="5" fill="#3bc" stroke="#023"/>'+p('M4 9l3-4 2 6z',Y),
mass:'<circle cx="12" cy="3" r="2.500" fill="none" stroke="#222" stroke-width="1.500"/>'+p('M9 5h6v3h2v13q-5 3-10 0V8h2z','#b08818','#220')+p('M10 9v12','none','#e0c060',1.500),
mat:'<circle cx="5" cy="5" r="3.500" fill="#0aa" stroke="#014"/>'+p('M10 3q9-2 9 7M16 8l3 4 3-4','none','#ca0',1.800)+p('M3 16L7 11H22V17L18 22H3ZM3 16H17V22M17 16L22 11','none','#222'),
b1:p('M2 9L12 1V13L2 18Z','#ffe890','#222')+p('M2 18l8-5 12 2-9 7z','#fff04a','#222')+p('M13 17L22 4','none','#06c',2.500),
b2:p('M1 2h5l2 2h6L10 10H1z','#ffe890','#222')+p('M16 3q5 0 6 6M19 6l3 4 1-5','none',B)+p('M3 18l9-6 9 4-9 7z','#fff04a','#222'),
upd:'<circle cx="12" cy="12" r="10.500" fill="#0a0a30"/>'+p('M4 13Q3 4 12 5Q17 6 17 10M20 11Q21 20 12 19Q7 18 7 14M11 10q4 1 3 5','none','#78e8d0',2.500)+p('M5 10Q8 4 13 6M19 14q-3 6-8 4','none','#ff6',1.500),
hand:p('M2 14Q3 1 13 1Q22 3 22 13Q22 23 12 23Q3 22 2 14Z','#ff7a10')+p('M9 21L5 14 8 14V7q2-2 3 1v3q2-2 3 0 2-1 3 1 2-1 2 1v5l-3 4z','#fff','#ff7a10')+p('M5 9Q10 0 17 5','none','#fff',1.300),
axis:p('M9 2V16L2 22M9 16H22M6 5l3-4 3 4M19 13l4 3-4 3','none',N,1.600),
grp:p('M1 1h22v22H1z','none','#99b')+p('M7 4h6v3H7zM3 11h6v3H3zM14 9h7v3h-7zM14 14h7v3h-7zM14 19h7v3h-7z',C,B),
grid:p('M5 1V23M11 1V23M17 1V23M1 5H23M1 11H23M1 17H23','none',B,1.300),
bx1:p('M6 5L10 1H19V18L15 22H6Z',C,'#024')+p('M6 5H15V22','none','#024',1.600)+p('M2 9h13l7-3M3 16h12l6-3','none',T,1.500),
bx2:p('M4 7L8 2H20V16L15 22H4Z',T,'#012')+p('M8 7h8v11H8z',C,'#012',1.800),
ext:p('M4 3H20V21H4Z','none','#999')+p('M2 1h4v4H2zM2 19h4v4H2zM18 19h4v4h-4z',T)+p('M14 9L21 2M16 1h6v6','none','#000',1.500),
g1:p('M3 2h9v5H3zM7 7v4h6M11 9L5 19h8M14 16h8v5h-8z','none','#aaa',1.500),g2:p('M3 5q9-7 18 0-4 6-14 5M3 13h16v3H6v5h14','none','#aaa',2),
ins:p('M3 1v21M3 3h7v4H3M3 20h7v-4H3M9 11h9M12 8l-3 3 3 3','none',B,1.300)+p('M16 9h7v4h-7z',C,T),
g3:p('M2 9q6-9 16-5 6 6 2 16l-5-4-4 6-3-6 2-7z','#c8c8d4','#aaa'),
ls:p('M8 2h8v4H8zM8 10h8v4H8zM8 18h8v4H8z',C,B),
pub:p('M2 14L12 1 23 6 13 20Z','#cef',B,1.500)+p('M2 14l1 4 9 5 11-14V6M2 14l11 6','none',B),
cort:'<circle cx="12" cy="12" r="6.500" fill="none" stroke="#fff" stroke-width="2"/>',
tv:p('M5 7h9v9H5zM5 4.500V6M14 4.500V6M5 19v-1.500M14 19v-1.500M4.500 5h10M4.500 18.500h10M18 4v4M18 12v7','none','#fff')+p('M17 8.500h2v2.500h-2z','#fff'),
edge:'<circle cx="12" cy="12" r="11.500" fill="#0f6cbd"/>'+p('M1 11A11.500 11.500 0 0123 8Q25 14 19 16Q14 16 15 12Q14 7 8 7Q3 8 1 11Z','#35c1b8')+p('M15 12q0 4 4 4 4-1 4-5L18 2q5 6-3 10z','#6ad86a')+p('M8 11q-3 9 6 12Q19 22 21 18Q12 20 8 11Z','#0a4c8c'),
mail:p('M0 8L12 0 24 8V23H0Z','#0f6cbd')+p('M3 9h18l-9 8z','#fff')+p('M0 9L12 17 24 9V23H0Z','#2aa8f0'),
rdp:p('M8 1l12 3v11L10 12z','#3ca0e8','#9cf')+p('M11 13l8 3-3 3-6-3z','#ccc')+p('M3 17l6-2 11 5-6 3z','#ddd','#999'),
store:p('M7 5V1h10v4','none','#1aa8e8',2)+'<rect x="0" y="4" width="24" height="20" rx="3" fill="#f4f4f4"/>'+p('M7 9h4v4H7z','#e43')+p('M13 9h4v4h-4z','#7b2')+p('M7 15h4v4H7z','#08d')+p('M13 15h4v4h-4z','#fb0'),
houz:'<rect x="2" y="2" width="20" height="20" rx="4" fill="#fff"/>'+p('M5 12L12 6 19 12V17Q12 20 5 17Z','none','#6a8fb8')+p('M8 12h8M8 15h8','none','#e8b070'),
map:'<rect width="24" height="24" rx="2" fill="#8cb8e8"/>'+p('M12 0h12v12H12z','#7cc88c')+p('M0 12h12v12H0z','#ffc890')+p('M12 12h12v12H12z','#ddd')+p('M1 2l12 11','none','#d8485a',4)+p('M13 12v9l2-2 2 4 2-1-2-4h3z','#fff','#444')+'<circle cx="13" cy="12" r="2.500" fill="#e01020"/>',
teams:'<circle cx="14" cy="4" r="3.500" fill="#7b83eb"/><circle cx="21" cy="5" r="2.500" fill="#5059c9"/>'+p('M9 8h14v9q-4 6-12 3z','#6068d0')+p('M0 6h12v12H0z','#4b53bc')+p('M3 9h6M6 9v7','none','#fff',1.800)+'<circle cx="20" cy="19" r="4.500" fill="#c4143c" stroke="#eee"/>',
nx:p('M1 1h5l5 9V1h5v17h-5L6 9v9H1z','#0a6a88','#fff')+p('M11 12h4l2 4 2-4h4l-4 6 4 6h-4l-2-4-2 4h-5l5-6z','#0a6a88','#fff'),
rain:p('M4 16a5 5 0 010-9A7 7 0 0117 6a5 5 0 012 10z','#e4eef8')+p('M14 16a5 5 0 018-7q2 6-4 7z','#9cc4ee')+p('M12 14q-4 7 0 7t0-7z','#2a90e8')
};
// Parameter cube shown on value nodes
I.cubeB=p('M16 8L23 1V16L16 23Z',T,'#000')+p('M1 8L7 1H23L16 8Z','#ffccb0','#000')+p('M8 3.500h10M6 6h10','none','#000')+p('M1 8h15v15H1z','#ffee88','#000')+p('M4 11h8v9H4zM4 15.500h8','none','#000',1.900)+p('M7 13.500h4M7 18h4M13 12v9','none','#666',1)+p('M18 19v-9l3-3v9M18 14l3-3','none','#033',1.600);
const draw=el=>{el.innerHTML='<svg viewBox="0 0 24 24">'+I[el.dataset.i]+(el.dataset.b==='s'?swirl:el.dataset.b==='w'?'<circle cx="5" cy="19" r="6" fill="#ff0"/><path d="M5 15v5M5 21.500v2" stroke="#000" stroke-width="2"/>':'')+'</svg>'};

// Specification tree: [toggle, icon, label, label class, icon class, badge]
const rows=[['plus','par','Parallel.17','gr','hid'],['plus','swp','Sweep.47','gr','hid'],['minus','par','Parallel.18','gr','hid'],['k','Offset1=10.9mm','gr'],['minus','swp','Sweep.48'],
['k','GuideDeviation=0.1mm'],['k','SmoothAngle=0.5deg'],['k','Length1=5.0mm'],['k','Length2=50.0mm'],['k','Angle=94.8deg'],
['none','inter','Intersect.12','or'],['plus','par','Parallel.19','or','','w'],['plus','swp','Sweep.49','','dim','s'],['plus','par','Parallel.20','','','s'],['plus','swp','Sweep.50','','dim','s'],['plus','off','Offset.15','','dim'],['plus','fil','Fillet.14','','dim'],['minus','fil','Fillet.15','','dim'],['k','Radius=3.0mm'],['plus','fil','Fillet.16','','dim','s'],['plus','fil','Fillet.17','','dim','s'],['minus','fil','Fillet.18','','dim','s'],['k','Radius=5.0mm']];
tree.innerHTML=rows.map(r=>r[0]==='k'?`<div class="tr0 kid"><i class="ic" data-i="cubeB"></i><span class="lbl ${r[2]||''}">${r[1]}</span></div>`
:`<div class="tr0"><i class="ball ${r[0]}"></i><i class="dash"></i><i class="ic ${r[4]||''}" data-i="${r[1]}" data-b="${r[5]||''}"></i><span class="lbl ${r[3]||''}">${r[2]}</span></div>`).join('');

// Lower toolbar: [grip x, first centre, last centre, icons]; * marks a drop-down
const groups=[[6,29,285,'new open save print cut copy paste undo* redo* help'],[312,334,473,'fx bub key tbl* lock* conf'],[497,519,831,'fly fit pan rot zin zout norm multi cube* cyl* h1 h2'],[858,880,908,'d1 d2'],[933,955,955,'cutp'],[1051,1073,1130,'meas cal mass'],[1160,1182,1182,'mat'],[1207,1230,1261,'b1* b2*'],[1286,1309,1681,'upd hand axis* grp grid* bx1* bx2 ext g1 g2 ins g3* ls pub']];
let x=0,h='';
for(const [g,a,b,s] of groups){h+=`<span class="grip" style="margin-left:${g-x}px"></span><div class="grp" style="width:${b-a+24}px;margin-left:${a-12-g-2}px">`+s.split(' ').map(n=>`<i class="ic ${n.endsWith('*')?'dd':''}" data-i="${n.replace('*','')}"></i>`).join('')+'</div>';x=b+12}
bbar.innerHTML=h+'<span class="combo gray bodysel">Body<i class="chev"></i></span><svg width="42" height="38" viewBox="0 0 42 38" class="dslogo"><g fill="none" stroke-width="2"><path d="M10 2q10 0 2 7q8 2 0 8" stroke="#d82030"/><path d="M8 15q9-1 5 7q-4 5-11 5l5-11" stroke="#2a3c9c"/><path d="M25 10q-9 1-5 7t-5 9" stroke="#f0a010"/></g><text x="7" y="37" font-size="10.500" font-weight="700" font-style="italic" font-family="Liberation Sans" letter-spacing="0" fill="#2a2a6a" textLength="33">CATIA</text></svg>';
document.querySelectorAll('[data-i]').forEach(draw);
</script>
</body>
</html>
